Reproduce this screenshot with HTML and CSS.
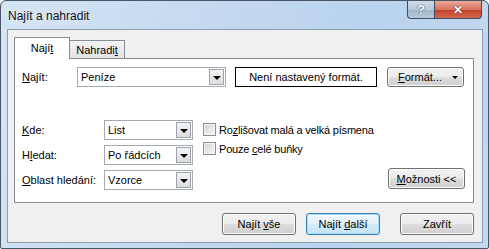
FILE: index.html
```html
<!DOCTYPE html>
<html lang="cs">
<head>
    <meta charset="UTF-8">
    <title>Najít a nahradit</title>
    <link rel="stylesheet" href="styles.css">
</head>
<body>
    <div class="window">
        <div class="titlebar">
            <span class="title">Najít a nahradit</span>
            <div class="caption-buttons">
                <span class="cap-help">?</span>
                <span class="cap-close">✕</span>
            </div>
        </div>

        <div class="client">
            <div class="tabs">
                <div class="tab active">Nají<u>t</u></div>
                <div class="tab">Nahradi<u>t</u></div>
            </div>

            <div class="panel">
                <div class="find-row">
                    <span class="label"><u>N</u>ajít:</span>
                    <div class="combo find-combo">
                        <span class="combo-text">Peníze</span>
                        <span class="drop"><span class="arrow"></span></span>
                    </div>
                    <div class="format-box">Není nastavený formát.</div>
                    <button class="btn format-btn"><span><u>F</u>ormát...</span><span class="small-arrow"></span></button>
                </div>

                <div class="options">
                    <div class="fields">
                        <div class="field">
                            <span class="label wide"><u>K</u>de:</span>
                            <div class="combo small-combo">
                                <span class="combo-text">List</span>
                                <span class="drop"><span class="arrow"></span></span>
                            </div>
                        </div>
                        <div class="field">
                            <span class="label wide">H<u>l</u>edat:</span>
                            <div class="combo small-combo">
                                <span class="combo-text">Po řádcích</span>
                                <span class="drop"><span class="arrow"></span></span>
                            </div>
                        </div>
                        <div class="field">
                            <span class="label wide"><u>O</u>blast hledání:</span>
                            <div class="combo small-combo">
                                <span class="combo-text">Vzorce</span>
                                <span class="drop"><span class="arrow"></span></span>
                            </div>
                        </div>
                    </div>

                    <div class="checks">
                        <label class="check"><span class="box"></span><span>Ro<u>z</u>lišovat malá a velká písmena</span></label>
                        <label class="check"><span class="box"></span><span>Pouze <u>c</u>elé buňky</span></label>
                    </div>

                    <div class="more">
                        <button class="btn more-btn"><u>M</u>ožnosti &lt;&lt;</button>
                    </div>
                </div>
            </div>

            <div class="actions">
                <button class="btn action-btn">Najít <u>v</u>še</button>
                <button class="btn action-btn default">Najít <u>d</u>alší</button>
                <button class="btn action-btn close-btn">Zavřít</button>
            </div>
        </div>
    </div>
</body>
</html>
```

FILE: styles.css
```css
body {
    margin: 0;
    font-family: "Liberation Sans", Arial, sans-serif;
    font-size: 11px;
    color: #000;
    background: #fff;
}

.window {
    width: 489px;
    height: 249px;
    box-sizing: border-box;
    border: 1px solid #4a5566;
    border-radius: 6px 6px 2px 2px;
    background: linear-gradient(100deg, #d4e4f4 0%, #c6daf0 35%, #b9d3ee 70%, #c2d8ef 100%);
    display: flex;
    flex-direction: column;
}

.titlebar {
    height: 28px;
    display: flex;
    justify-content: space-between;
    align-items: flex-start;
    padding-left: 7px;
}

.title {
    font-size: 12px;
    margin-top: 8px;
    color: #111;
    text-shadow: 0 0 6px #eef5fc;
}

.caption-buttons {
    display: flex;
    margin-right: 6px;
}

.cap-help,
.cap-close {
    height: 18px;
    box-sizing: border-box;
    border: 1px solid #3e4d60;
    border-top: none;
    display: flex;
    align-items: center;
    justify-content: center;
    color: #fff;
    font-weight: bold;
}

.cap-help {
    width: 27px;
    border-radius: 0 0 0 4px;
    border-right: none;
    background: linear-gradient(#cfdbe8 0%, #b9c9da 50%, #9fb3c8 51%, #b8cadc 100%);
    font-size: 13px;
    text-shadow: 0 0 1px #33414f, 0 0 1px #33414f;
}

.cap-close {
    width: 48px;
    border-radius: 0 0 4px 0;
    background: linear-gradient(#e9a99b 0%, #d8735e 50%, #c4402a 51%, #d06a4d 100%);
    font-size: 12px;
    text-shadow: 0 0 1px #5b1a10, 0 0 1px #5b1a10;
}

.client {
    margin: 0 5px 0 6px;
    height: 214px;
    box-sizing: border-box;
    border: 1px solid #8c9caf;
    background: #f0f0f0;
    padding: 7px 8px 0 6px;
    display: flex;
    flex-direction: column;
}

.tabs {
    display: flex;
    align-items: flex-end;
    height: 21px;
    position: relative;
    z-index: 1;
}

.tab {
    width: 55px;
    height: 18px;
    box-sizing: border-box;
    border: 1px solid #898c95;
    border-bottom: none;
    background: linear-gradient(#f3f3f3, #e3e3e3);
    display: flex;
    align-items: center;
    justify-content: center;
}

.tab + .tab {
    border-left: none;
}

.tab.active {
    width: 56px;
    height: 22px;
    background: #fff;
    margin-bottom: -1px;
    padding-bottom: 1px;
}

.panel {
    width: 460px;
    height: 145px;
    box-sizing: border-box;
    border: 1px solid #898c95;
    background: #fff;
    padding: 8px 0 0 7px;
    display: flex;
    flex-direction: column;
}

.find-row {
    display: flex;
    align-items: center;
    height: 20px;
}

.label {
    width: 55px;
}

.label.wide {
    width: 82px;
}

.combo {
    height: 20px;
    box-sizing: border-box;
    border: 1px solid #a4aab3;
    display: flex;
    align-items: center;
    background: #fff;
}

.combo-text {
    flex-grow: 1;
    padding-left: 3px;
}

.drop {
    width: 15px;
    height: 16px;
    margin-right: 1px;
    box-sizing: border-box;
    border: 1px solid #9da3ab;
    background: linear-gradient(#f4f4f4, #dcdcdc);
    display: flex;
    align-items: center;
    justify-content: center;
}

.arrow {
    width: 0;
    height: 0;
    border-left: 4px solid transparent;
    border-right: 4px solid transparent;
    border-top: 4px solid #000;
    margin-top: 1px;
}

.find-combo {
    width: 149px;
}

.format-box {
    width: 142px;
    height: 20px;
    box-sizing: border-box;
    border: 1px solid #000;
    margin-left: 9px;
    display: flex;
    align-items: center;
    justify-content: center;
}

.btn {
    font-family: inherit;
    font-size: 11px;
    color: #000;
    box-sizing: border-box;
    border: 1px solid #707070;
    border-radius: 3px;
    background: linear-gradient(#f2f2f2 0%, #ebebeb 48%, #dddddd 52%, #cfcfcf 100%);
    box-shadow: inset 0 0 0 1px #fcfcfc;
    padding: 0;
}

.format-btn {
    width: 77px;
    height: 20px;
    margin-left: 10px;
    display: flex;
    align-items: center;
    justify-content: flex-end;
    gap: 10px;
    padding-right: 5px;
}

.small-arrow {
    width: 0;
    height: 0;
    border-left: 3px solid transparent;
    border-right: 3px solid transparent;
    border-top: 3px solid #000;
}

.options {
    display: flex;
    margin-top: 33px;
}

.fields {
    display: flex;
    flex-direction: column;
    gap: 5px;
}

.field {
    display: flex;
    align-items: center;
}

.small-combo {
    width: 89px;
}

.checks {
    display: flex;
    flex-direction: column;
    gap: 6px;
    margin-left: 10px;
    padding-top: 3px;
}

.check {
    display: flex;
    align-items: center;
    gap: 3px;
    height: 13px;
    letter-spacing: -0.2px;
}

.box {
    width: 13px;
    height: 13px;
    box-sizing: border-box;
    border: 1px solid #8e8f8f;
    background: linear-gradient(135deg, #d2d2d2, #f8f8f8);
    box-shadow: inset 0 0 0 1px #f4f4f4;
}

.more {
    flex-grow: 1;
    display: flex;
    justify-content: flex-end;
    align-items: flex-end;
    padding-right: 8px;
}

.more-btn {
    width: 77px;
    height: 21px;
    margin-bottom: 1px;
}

.actions {
    display: flex;
    justify-content: flex-end;
    margin-top: 10px;
}

.action-btn {
    width: 74px;
    height: 22px;
    margin-left: 10px;
}

.action-btn.default {
    border-color: #3c7fb1;
    box-shadow: inset 0 0 0 1px #a9dcf6;
    background: linear-gradient(#eef7fd 0%, #e4f2fb 48%, #d3ebf9 52%, #c5e3f6 100%);
}

.action-btn.close-btn {
    margin-left: 20px;
}
```
